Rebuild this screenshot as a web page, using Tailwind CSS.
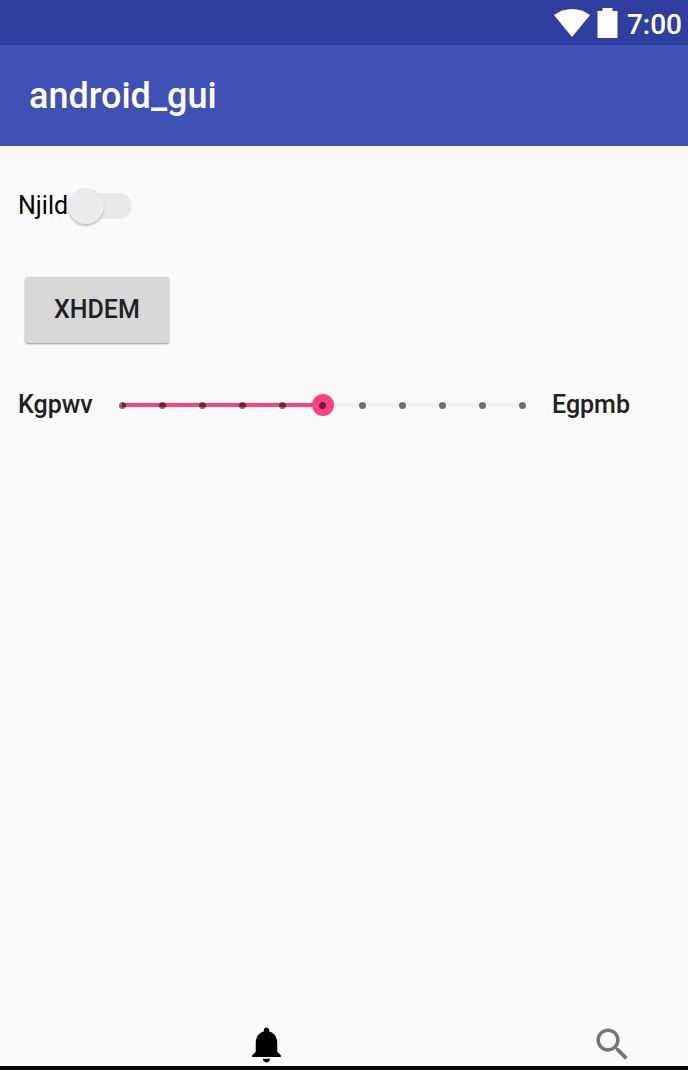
<!DOCTYPE html>
<html lang="en">
<head>
<meta charset="utf-8">
<meta name="viewport" content="width=device-width, initial-scale=1">
<title>android_gui</title>
<script src="https://cdn.jsdelivr.net/npm/@tailwindcss/browser@4"></script>
</head>
<body class="flex min-h-screen flex-col bg-[#fafafa] font-['Roboto',sans-serif] text-[#212121]">
  <div class="flex h-[45px] items-center justify-end bg-[#303f9f] pr-[6px] text-white">
    <svg class="mr-[7px] h-7 w-9" viewBox="0 0 36 28" fill="currentColor" aria-hidden="true"><path d="M0 6Q8 0 18 0T36 6L18 28Z"/></svg>
    <svg class="mr-[9px] h-[30px] w-[21px]" viewBox="0 0 21 30" fill="currentColor" aria-hidden="true"><path d="M5.500 0h10v3H20.500v27H.5V3h5z"/></svg>
    <time class="pt-1 text-[28px] leading-8 font-medium">7:00</time>
  </div>
  <header class="flex h-[101px] items-center bg-[#3f51b5] px-[29px] text-white">
    <h1 class="text-[36px] leading-[44px] font-medium">android_gui</h1>
  </header>

  <main class="flex flex-1 flex-col items-start pt-[41px]">
    <label class="flex h-[38px] cursor-pointer items-center pl-[18px] text-[25px] text-black">
      Njild
      <span class="relative flex h-9 w-16 items-center">
        <input type="checkbox" role="switch" class="peer ml-2 h-[26px] w-14 appearance-none rounded-full bg-[#e9e9e9] checked:bg-[#ff4081]/40">
        <span class="absolute top-0 left-0 size-9 rounded-full bg-[#ebebeb] shadow-[0_2px_2px_rgba(0,0,0,0.22)] peer-checked:translate-x-7 peer-checked:bg-[#ff4081]"></span>
      </span>
    </label>

    <button type="button" class="mt-[52px] ml-[25px] h-[66px] rounded-[3px] bg-[#d6d8d7] px-[29px] text-[25px] font-medium shadow-[0_1px_2px_rgba(0,0,0,0.4)]">XHDEM</button>

    <div class="mt-[42px] flex h-10 w-full items-center pl-[18px] text-[25px] font-medium">
      <label for="level" class="w-[93px] shrink-0">Kgpwv</label>
      <div class="relative flex h-6 min-w-0 flex-1 items-center">
        <input id="level" type="range" min="0" max="10" value="5" class="h-[22px] w-full appearance-none bg-[linear-gradient(to_right,transparent_11px,#ff4081_11px,#ff4081_50%,#f0f0f0_50%,#f0f0f0_calc(100%-11px),transparent_calc(100%-11px))] bg-[length:100%_4px] bg-center bg-no-repeat [&::-webkit-slider-thumb]:size-[22px] [&::-webkit-slider-thumb]:appearance-none [&::-webkit-slider-thumb]:rounded-full [&::-webkit-slider-thumb]:bg-[#ff4081]">
        <div class="pointer-events-none absolute inset-x-2 inset-y-0 flex items-center justify-between" aria-hidden="true">
          <i class="size-[7px] rounded-full bg-black/55"></i><i class="size-[7px] rounded-full bg-black/55"></i><i class="size-[7px] rounded-full bg-black/55"></i><i class="size-[7px] rounded-full bg-black/55"></i><i class="size-[7px] rounded-full bg-black/55"></i><i class="size-[7px] rounded-full bg-black/55"></i><i class="size-[7px] rounded-full bg-black/55"></i><i class="size-[7px] rounded-full bg-black/55"></i><i class="size-[7px] rounded-full bg-black/55"></i><i class="size-[7px] rounded-full bg-black/55"></i><i class="size-[7px] rounded-full bg-black/55"></i>
        </div>
      </div>
      <label for="level" class="w-[154px] shrink-0 pl-[18px]">Egpmb</label>
    </div>
  </main>

  <nav class="flex items-center justify-between border-b-4 border-black pr-[54px] pl-[245px]">
    <button type="button" aria-label="Notifications" class="text-black">
      <svg class="size-[43px]" viewBox="0 0 24 24" fill="currentColor"><path d="M12 22c1.100 0 2-.9 2-2h-4c0 1.100.9 2 2 2zm6-6v-5c0-3.070-1.640-5.640-4.500-6.320V4c0-.83-.67-1.500-1.500-1.500s-1.500.67-1.500 1.500v.68C7.630 5.360 6 7.920 6 11v5l-2 2v1h16v-1l-2-2z"/></svg>
    </button>
    <button type="button" aria-label="Search" class="text-[#757575]">
      <svg class="size-[43px]" viewBox="0 0 24 24" fill="currentColor"><path d="M15.500 14h-.79l-.28-.27C15.410 12.590 16 11.110 16 9.500 16 5.910 13.090 3 9.500 3S3 5.910 3 9.500 5.910 16 9.500 16c1.610 0 3.090-.59 4.230-1.570l.27.28v.79l5 4.990L20.490 19l-4.990-5zm-6 0C7.010 14 5 11.990 5 9.500S7.010 5 9.500 5 14 7.010 14 9.500 11.990 14 9.500 14z"/></svg>
    </button>
  </nav>
</body>
</html>
